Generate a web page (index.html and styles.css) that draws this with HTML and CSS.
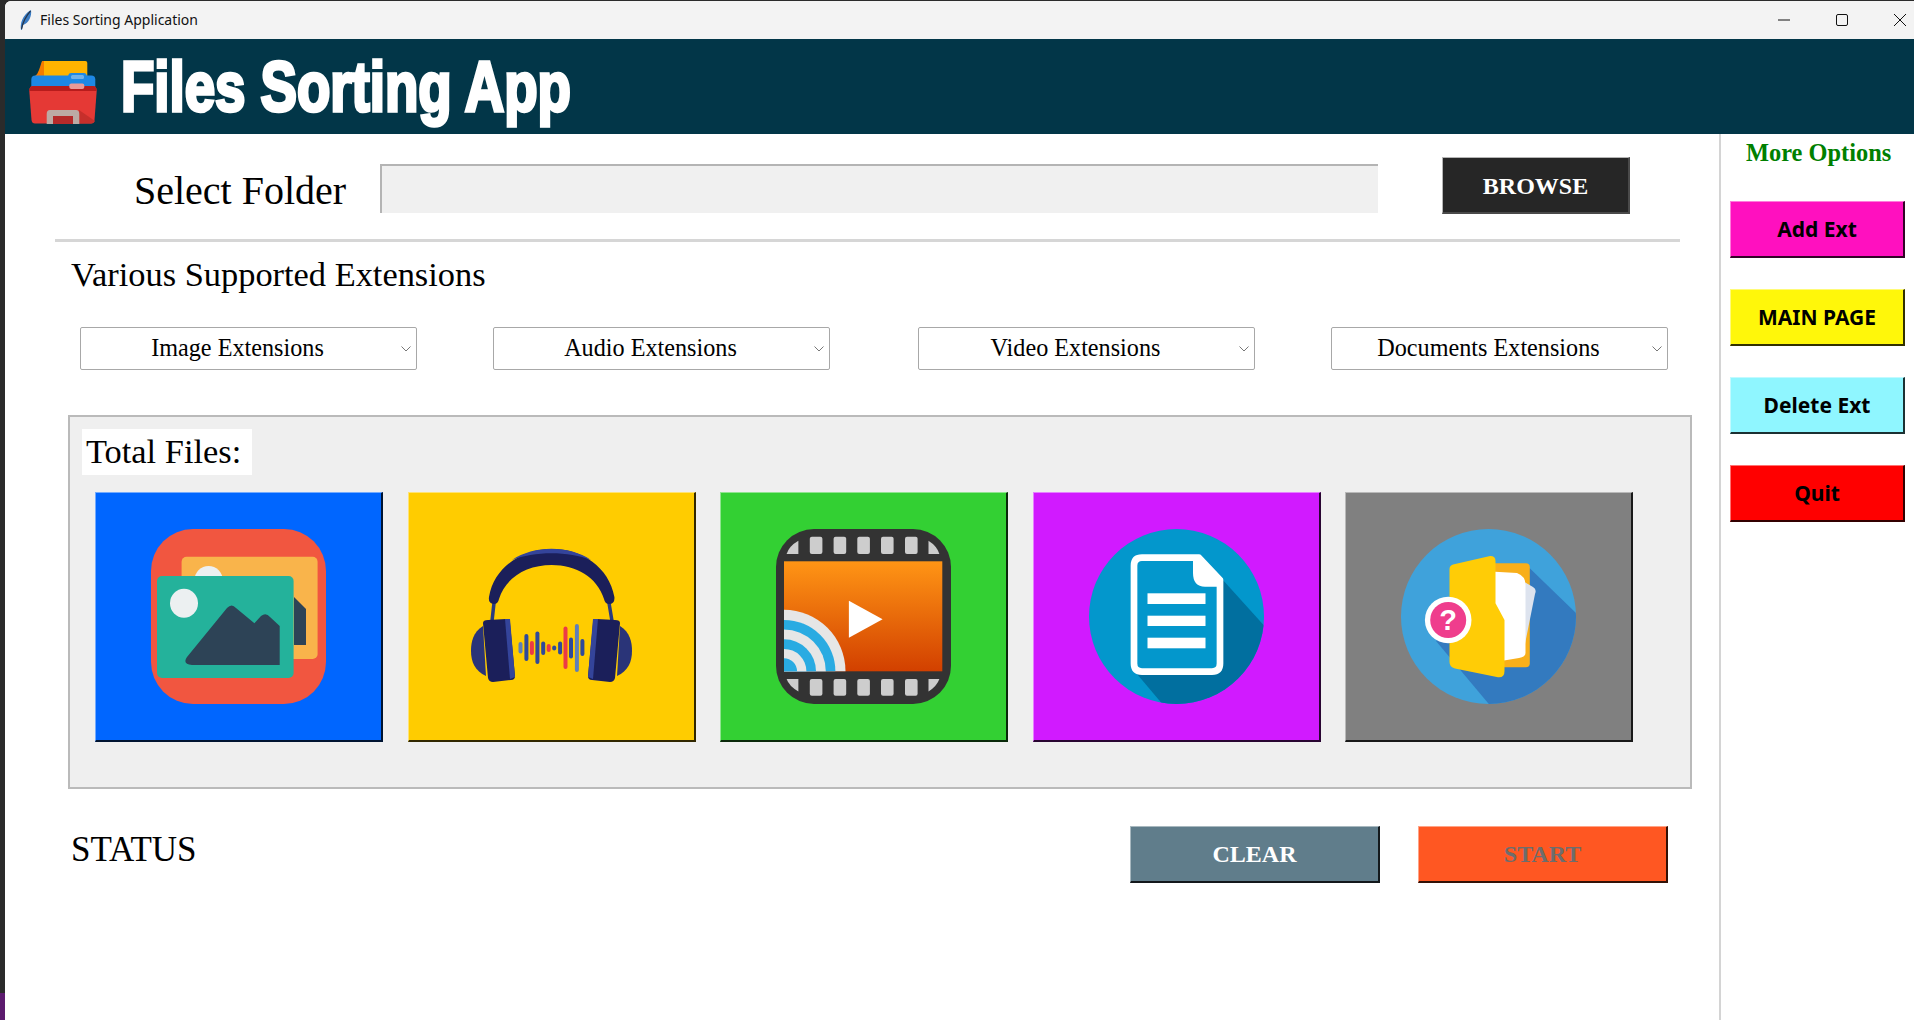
FILE: index.html
```html
<!DOCTYPE html>
<html lang="en">

<head>
  <meta charset="UTF-8">
  <meta name="viewport" content="width=device-width, initial-scale=1.0">
  <title>Files Sorting Application</title>
  <link rel="stylesheet" href="styles.css">
</head>

<body>
  <div class="window">
    <div class="titlebar">
      <svg class="feather" width="12" height="20" viewBox="0 0 12 20">
        <path d="M1 20 C0 14 2 5 11 0 C12 6 9 13 3 15 L1.8 20 Z" fill="#3b7cc4" />
        <path d="M1.5 19 C3 12 6 6 10.5 1" fill="none" stroke="#26364a" stroke-width="1.2" />
      </svg>
      <span class="titlebar-text">Files Sorting Application</span>
      <div class="window-controls">
        <svg width="12" height="12" viewBox="0 0 12 12">
          <path d="M0 6 H12" stroke="#111" stroke-width="1" />
        </svg>
        <svg width="12" height="12" viewBox="0 0 12 12">
          <rect x="0.5" y="0.5" width="11" height="11" rx="1.5" fill="none" stroke="#111" stroke-width="1" />
        </svg>
        <svg width="12" height="12" viewBox="0 0 12 12">
          <path d="M0 0 L12 12 M12 0 L0 12" stroke="#111" stroke-width="1" />
        </svg>
      </div>
    </div>

    <header class="banner">
      <svg class="logo" width="68" height="63" viewBox="0 0 68 63">
        <rect x="12.7" y="0" width="45.6" height="18" rx="2" fill="#ffb300" />
        <path d="M12.7 1 Q12.7 0 14 0 L15 0 V16 H5 Q9 13 10 9 Z" fill="#f57c00" />
        <rect x="2.3" y="14.5" width="64" height="14" rx="4" fill="#1e88e5" />
        <rect x="39.3" y="12" width="18.4" height="7.5" rx="3" fill="#1e88e5" />
        <rect x="42" y="14" width="13" height="4" rx="1.5" fill="#6fb1ea" />
        <path d="M0.3 30 Q0.3 25 4 25 H64 Q67.7 25 67.7 30 L65.5 59 Q65 62.5 62 62.5 H6 Q3 62.5 2.5 59 Z" fill="#e53935" />
        <path d="M0.3 30 Q0.3 25 4 25 H64 Q67.7 25 67.7 30 Z" fill="#b71c1c" />
        <rect x="40.3" y="22.5" width="15" height="5.5" rx="2" fill="#ea9a98" />
        <path d="M50 49 L66 60 Q65 62.5 62 62.5 H50 Z" fill="#c62f2b" />
        <path d="M17.7 63 V53 Q17.7 49 21 49 H47 Q50.3 49 50.3 53 V63 H44 V55 H24 V63 Z" fill="#bcaaa4" />
        <rect x="24" y="55" width="20" height="8" fill="#b52a2a" />
      </svg>
      <h1 class="app-title">Files Sorting App</h1>
    </header>

    <div class="content">
      <main class="main">
        <div class="folder-row">
          <label class="folder-label">Select Folder</label>
          <div class="folder-input"></div>
          <button class="btn raised btn-browse">BROWSE</button>
        </div>
        <div class="divider"></div>

        <h2 class="section-title">Various Supported Extensions</h2>
        <div class="combo-row">
          <div class="combo">
            <span>Image Extensions</span>
            <svg width="10" height="6" viewBox="0 0 10 6"><path d="M0.5 0.5 L5 5 L9.5 0.5" fill="none" stroke="#777" /></svg>
          </div>
          <div class="combo">
            <span>Audio Extensions</span>
            <svg width="10" height="6" viewBox="0 0 10 6"><path d="M0.5 0.5 L5 5 L9.5 0.5" fill="none" stroke="#777" /></svg>
          </div>
          <div class="combo combo-video">
            <span>Video Extensions</span>
            <svg width="10" height="6" viewBox="0 0 10 6"><path d="M0.5 0.5 L5 5 L9.5 0.5" fill="none" stroke="#777" /></svg>
          </div>
          <div class="combo">
            <span>Documents Extensions</span>
            <svg width="10" height="6" viewBox="0 0 10 6"><path d="M0.5 0.5 L5 5 L9.5 0.5" fill="none" stroke="#777" /></svg>
          </div>
        </div>

        <section class="panel">
          <div class="total-label">Total Files:</div>
          <div class="tiles">
            <!-- images -->
            <div class="tile raised tile-image">
              <svg width="175" height="175" viewBox="0 0 175 175">
                <rect width="175" height="175" rx="42" fill="#f15640" />
                <rect x="30.6" y="27.7" width="136" height="102.3" rx="5" fill="#f9b44b" />
                <circle cx="57.6" cy="51" r="14" fill="#ecf0f1" />
                <path d="M143 68 L155 80 V116 H143 Z" fill="#2d4356" />
                <rect x="6" y="47" width="136.6" height="102" rx="5" fill="#24b29b" />
                <ellipse cx="33" cy="74.3" rx="14" ry="14.5" fill="#ecf0f1" />
                <path d="M36 128 L76 79 Q80.7 74 85 79 L103.4 94.3 L110 87 Q115 83 119 88 L128.7 97 V136 H41 Q31 135 36 128 Z" fill="#2d4356" />
              </svg>
            </div>
            <!-- audio -->
            <div class="tile raised tile-audio">
              <svg width="175" height="175" viewBox="0 0 175 175">
                <path d="M30 74 L28 92 M145 74 L148 92" stroke="#2a3a80" stroke-width="3.5" fill="none" />
                <path d="M25 68 C30 38 58 20 87.7 20 C118 20 145 38 150.4 68 Q151 75 145 75 Q141 75 140 70 C133 48 112 36 87.7 36 C63 36 42 48 35 70 Q34 75 30 75 Q24 75 25 68 Z" fill="#1b1f5a" />
                <path d="M48 31 C70 16 105 16 127 31 C105 22 70 22 48 31 Z" fill="#34449a" />
                <path d="M19 97 C9 103 7 113 7 122 C7 133 11 142 22 147 Z" fill="#2a3478" />
                <path d="M19 94 Q19 91 24 91 L42 90 Q46 90 46 94 L51 147 Q51 151 47 151 L29 153 Q25 153 24 149 Z" fill="#1b1f5a" />
                <path d="M41 90 L46 90 L51 148 L46 150 Z" fill="#34449a" />
                <path d="M156 97 C166 103 168 113 168 122 C168 133 164 142 153 147 Z" fill="#2a3478" />
                <path d="M156 94 Q156 91 151 91 L133 90 Q129 90 129 94 L124 147 Q124 151 128 151 L146 153 Q150 153 151 149 Z" fill="#1b1f5a" />
                <path d="M134 90 L129 90 L124 148 L129 150 Z" fill="#34449a" />
                <g stroke-width="4" stroke-linecap="round">
                  <path d="M56.5 115 V122.5" stroke="#5f7fb8" />
                  <path d="M62.4 107 V130" stroke="#2f4a9a" />
                  <path d="M67.9 114 V124" stroke="#ec3a46" />
                  <path d="M73.4 104.5 V133" stroke="#2f4a9a" />
                  <path d="M79.2 114.5 V124" stroke="#2f4a9a" />
                  <path d="M84.7 117 V121" stroke="#ec3a46" />
                  <path d="M90.2 118.5 V119.5" stroke="#2f4a9a" />
                  <path d="M96.1 114.5 V123.5" stroke="#2f4a9a" />
                  <path d="M101.5 99.5 V138" stroke="#ec3a46" />
                  <path d="M107 110.5 V127.5" stroke="#2f4a9a" />
                  <path d="M112.9 97 V141" stroke="#5f7fb8" />
                  <path d="M118.4 112 V125" stroke="#2f4a9a" />
                </g>
              </svg>
            </div>
            <!-- video -->
            <div class="tile raised tile-video">
              <svg width="175" height="175" viewBox="0 0 175 175">
                <defs>
                  <linearGradient id="reel" x1="0" y1="0" x2="0" y2="1">
                    <stop offset="0" stop-color="#ff9515" />
                    <stop offset="1" stop-color="#d24000" />
                  </linearGradient>
                  <clipPath id="screen">
                    <rect x="8" y="32.3" width="158.3" height="110" />
                  </clipPath>
                </defs>
                <rect width="175" height="175" rx="38" fill="#333" />
                <rect x="8" y="32.3" width="158.3" height="110" fill="url(#reel)" />
                <g clip-path="url(#screen)">
                  <circle cx="8" cy="142.3" r="61.5" fill="#e6e6e6" />
                  <circle cx="8" cy="142.3" r="51.4" fill="#29abe2" />
                  <circle cx="8" cy="142.3" r="41.8" fill="#e6e6e6" />
                  <circle cx="8" cy="142.3" r="32" fill="#29abe2" />
                  <circle cx="8" cy="142.3" r="22.4" fill="#e6e6e6" />
                  <circle cx="8" cy="142.3" r="13" fill="#29abe2" />
                </g>
                <path d="M72.9 71.7 V108.7 L106.6 90.3 Z" fill="#fff" />
                <g fill="#cdcdcd">
                  <path d="M22.4 11.7 V25 H10.6 Q13 17 22.4 11.7 Z" />
                  <rect x="33.8" y="7.7" width="12.6" height="17.3" rx="2" />
                  <rect x="57.6" y="7.7" width="12.6" height="17.3" rx="2" />
                  <rect x="81.3" y="7.7" width="12.6" height="17.3" rx="2" />
                  <rect x="105" y="7.7" width="12.6" height="17.3" rx="2" />
                  <rect x="129" y="7.7" width="12.6" height="17.3" rx="2" />
                  <path d="M152.5 11.7 V25 H163.4 Q161 17 152.5 11.7 Z" />
                  <path d="M22.4 162.5 V150 H10.6 Q13 157 22.4 162.5 Z" />
                  <rect x="33.8" y="150" width="12.6" height="16.7" rx="2" />
                  <rect x="57.6" y="150" width="12.6" height="16.7" rx="2" />
                  <rect x="81.3" y="150" width="12.6" height="16.7" rx="2" />
                  <rect x="105" y="150" width="12.6" height="16.7" rx="2" />
                  <rect x="129" y="150" width="12.6" height="16.7" rx="2" />
                  <path d="M152.5 162.5 V150 H163.4 Q161 157 152.5 162.5 Z" />
                </g>
              </svg>
            </div>
            <!-- documents -->
            <div class="tile raised tile-docs">
              <svg width="175" height="175" viewBox="0 0 175 175">
                <defs>
                  <clipPath id="docDisc">
                    <circle cx="87.5" cy="87.5" r="87.5" />
                  </clipPath>
                </defs>
                <circle cx="87.5" cy="87.5" r="87.5" fill="#0397cc" />
                <path d="M133 50 L190 113 V190 H86 L48 145 Z" fill="#016f9f" clip-path="url(#docDisc)" />
                <path d="M110 28.7 H53 Q45 28.7 45 36.7 V134.6 Q45 142.6 53 142.6 H123 Q131 142.6 131 134.6 V51 Z" fill="#0397cc" stroke="#fff" stroke-width="6.7" stroke-linejoin="round" />
                <path d="M104 27 H111 L134 50 V57.7 H116 Q104 57.7 104 44 Z" fill="#fff" />
                <rect x="58.5" y="64.3" width="58" height="10.7" fill="#fff" />
                <rect x="58.5" y="86.7" width="58" height="10.3" fill="#fff" />
                <rect x="58.5" y="108.7" width="58" height="10.6" fill="#fff" />
              </svg>
            </div>
            <!-- others -->
            <div class="tile raised tile-other">
              <svg width="175" height="175" viewBox="0 0 175 175">
                <defs>
                  <clipPath id="otherDisc">
                    <circle cx="87.5" cy="87.5" r="87.5" />
                  </clipPath>
                </defs>
                <circle cx="87.5" cy="87.5" r="87.5" fill="#3fa2db" />
                <path d="M128.5 39 L176 85 V180 H92 L35 112 Z" fill="#337abf" clip-path="url(#otherDisc)" />
                <rect x="90" y="34.3" width="38.8" height="104" rx="4" fill="#f8af1a" />
                <path d="M110 45 L132 58 Q136 60 134 65 L122 125 H105 Z" fill="#dde3ee" />
                <path d="M94 42.7 L116 44 Q124.5 47 124.5 56 V124 Q124.5 128 118 129 L100 132 H94 Z" fill="#fff" />
                <path d="M48.5 40 Q48.5 36.5 52 35.5 L88 27.2 Q94.5 26.5 94.5 32 V74.3 L103.5 91 V142 Q103.5 149 97 148.3 L54 139.5 Q48.5 138 48.5 133 Z" fill="#ffcc06" />
                <circle cx="47.2" cy="91" r="23.3" fill="#fff" />
                <circle cx="47.2" cy="91" r="18" fill="#ef3d8d" />
                <text x="47.2" y="101" text-anchor="middle" class="badge-mark">?</text>
              </svg>
            </div>
          </div>
        </section>

        <div class="status-row">
          <div class="status-text">STATUS</div>
          <button class="btn raised btn-clear">CLEAR</button>
          <button class="btn raised btn-start">START</button>
        </div>
      </main>

      <aside class="side">
        <div class="side-title">More Options</div>
        <button class="side-btn raised btn-add">Add Ext</button>
        <button class="side-btn raised btn-home">MAIN PAGE</button>
        <button class="side-btn raised btn-delete">Delete Ext</button>
        <button class="side-btn raised btn-quit">Quit</button>
      </aside>
    </div>
  </div>
</body>

</html>
```

FILE: styles.css
```css
* {
  box-sizing: border-box;
}

html,
body {
  height: 100%;
}

body {
  margin: 0;
  padding: 1px 0 0 5px;
  overflow: hidden;
  background: linear-gradient(#2b2b2b 993px, #5c1b6e 993px);
  font-family: "Liberation Serif", serif;
  color: #000;
}

.window {
  height: 100%;
  display: flex;
  flex-direction: column;
  background-color: #fff;
  border-top-left-radius: 6px;
  overflow: hidden;
}

/* title bar */
.titlebar {
  height: 38px;
  flex: none;
  display: flex;
  align-items: center;
  background-color: #f3f3f3;
  padding-left: 15px;
  padding-bottom: 1px;
}

.feather {
  margin-right: 8px;
}

.titlebar-text {
  font-family: "Noto Sans", sans-serif;
  font-size: 14px;
  color: #111;
}

.window-controls {
  margin-left: auto;
  display: flex;
  gap: 46px;
  padding-right: 8px;
}

/* banner */
.banner {
  height: 95px;
  flex: none;
  display: flex;
  align-items: center;
  gap: 24px;
  padding-left: 24px;
  background-color: #023648;
}

.logo {
  margin-top: 12px;
}

/* no condensed face installed, so squeeze the bold one */
.app-title {
  margin: 0;
  font-family: "Liberation Sans", sans-serif;
  font-size: 70px;
  font-weight: bold;
  color: #fff;
  -webkit-text-stroke: 3.5px #fff;
  white-space: nowrap;
  transform: scaleX(0.78);
  transform-origin: left center;
}

/* layout */
.content {
  flex: 1;
  display: flex;
  min-height: 0;
}

.main {
  flex: 1;
  min-width: 0;
}

.side {
  width: 195px;
  flex: none;
  border-left: 2px solid #d4d4d4;
  padding: 5px 0 0 9px;
  display: flex;
  flex-direction: column;
  align-items: flex-start;
  gap: 31px;
}

.side-title {
  margin: 0 0 4px 16px;
  font-size: 24.4px;
  line-height: 27px;
  font-weight: bold;
  color: #008000;
  white-space: nowrap;
}

/* Tk style raised edge */
.raised {
  border-style: solid;
  border-width: 1px 2px 2px 1px;
  border-color: rgba(255, 255, 255, 0.45) rgba(0, 0, 0, 0.8) rgba(0, 0, 0, 0.8) rgba(255, 255, 255, 0.45);
}

.btn {
  height: 57px;
  font-family: "Liberation Serif", serif;
  font-size: 24px;
  font-weight: bold;
  color: #fff;
  padding: 0;
}

.side-btn {
  width: 175px;
  height: 57px;
  padding: 0;
  font-family: "Noto Sans", sans-serif;
  font-size: 21px;
  font-weight: 700;
  color: #000;
}

.btn-add {
  background-color: #ff10bf;
}

.btn-home {
  background-color: #fff70a;
}

.btn-delete {
  background-color: #8ff6ff;
}

.btn-quit {
  background-color: #ff0000;
}

/* folder row */
.folder-row {
  height: 105px;
  display: flex;
  align-items: flex-start;
  padding-left: 129px;
}

.folder-label {
  width: 246px;
  margin-top: 33px;
  font-size: 40px;
  white-space: nowrap;
}

.folder-input {
  width: 998px;
  height: 49px;
  margin-top: 30px;
  background-color: #f0f0f0;
  border-style: solid;
  border-width: 2px 0 0 2px;
  border-color: #b4b4b4;
}

.btn-browse {
  width: 188px;
  margin-top: 23px;
  margin-left: 64px;
  padding-top: 2px;
  background-color: #262626;
  border-color: #b5b5b5 #4a4a4a #4a4a4a #b5b5b5;
}

.divider {
  width: 1625px;
  height: 3px;
  margin-left: 50px;
  background-color: #d6d6d6;
}

.section-title {
  margin: 13px 0 0 66px;
  font-size: 34.4px;
  line-height: 38px;
  font-weight: normal;
}

/* extension dropdowns */
.combo-row {
  display: flex;
  gap: 76px;
  margin: 34px 0 0 75px;
}

.combo {
  width: 337px;
  height: 43px;
  flex: none;
  display: flex;
  align-items: center;
  padding-right: 5px;
  background-color: #fff;
  border: 1px solid #a8a8a8;
  border-radius: 2px;
  font-size: 24.2px;
}

.combo span {
  flex: 1;
  padding: 0 7px 2px 0;
  text-align: center;
}

.combo-video {
  margin-left: 12px;
}

/* total files panel */
.panel {
  width: 1624px;
  height: 374px;
  margin: 45px 0 0 63px;
  padding: 12px 0 0 12px;
  background-color: #efefef;
  border: 2px solid #bababa;
}

.total-label {
  width: 170px;
  height: 46px;
  padding-left: 4px;
  background-color: #fff;
  font-size: 34.4px;
  line-height: 44px;
  white-space: nowrap;
}

.tiles {
  display: flex;
  gap: 24.5px;
  margin: 17px 0 0 13px;
}

.tile {
  width: 288px;
  height: 250px;
  flex: none;
  display: flex;
  align-items: center;
  justify-content: center;
}

.tile-image {
  background-color: #0066ff;
}

.tile-audio {
  background-color: #ffcc00;
}

.tile-video {
  background-color: #33d033;
}

.tile-docs {
  background-color: #d11aff;
}

.tile-other {
  background-color: #808080;
}

.badge-mark {
  font-family: "Liberation Sans", sans-serif;
  font-size: 29px;
  font-weight: bold;
  fill: #fff;
}

/* status row */
.status-row {
  display: flex;
  align-items: flex-start;
  gap: 38px;
  margin: 37px 51px 0 66px;
}

.status-text {
  margin-top: 4px;
  margin-right: auto;
  font-size: 35px;
}

.btn-clear {
  width: 250px;
  background-color: #607d8b;
}

.btn-start {
  width: 250px;
  background-color: #ff5722;
  color: #6d6d6d;
}
```
